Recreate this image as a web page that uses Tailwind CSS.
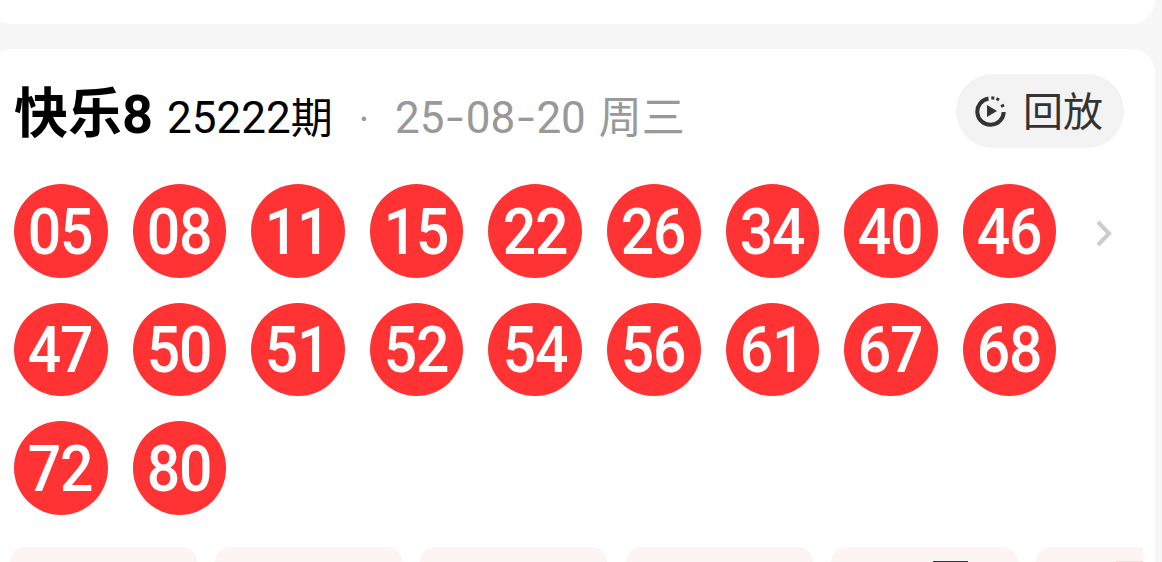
<!DOCTYPE html>
<html lang="zh-CN">

<head>
    <meta charset="UTF-8">
    <meta name="viewport" content="width=device-width, initial-scale=1.0">
    <script src="https://cdn.jsdelivr.net/npm/@tailwindcss/browser@4"></script>
    <title>快乐8</title>
</head>

<body class="bg-[#f7f7f7] overflow-hidden h-[562px] font-['Roboto','Noto_Sans_CJK_SC',sans-serif]">
    <!-- previous card, only its bottom shows -->
    <div class="h-[24px] w-[1167px] -ml-[12px] bg-white rounded-b-[24px]"></div>

    <div class="mt-[25px] w-[1167px] h-[513px] overflow-hidden -ml-[12px] pl-[12px] bg-white rounded-t-[24px]">
        <!-- header -->
        <div class="flex items-center h-[99px] pt-[25px] pl-[14px] pr-[31px]">
            <div class="flex items-baseline pt-[8px] leading-none">
                <span class="text-[54px] font-bold text-black">快乐8</span>
                <span class="ml-[14px] text-[44px] text-black">25222<span class="text-[42px]">期</span></span>
                <span class="ml-[26px] text-[40px] text-[#999999]">·</span>
                <span class="ml-[26px] text-[44px] text-[#999999]">25<span class="inline-block mx-[4.5px] scale-x-[1.4]">-</span>08<span class="inline-block mx-[4.5px] scale-x-[1.4]">-</span>20 <span class="ml-[2px] text-[43px]">周三</span></span>
            </div>
            <button class="ml-auto flex items-center h-[74px] w-[168px] pl-[19px] rounded-full bg-[#f3f3f3] text-[40px] leading-none text-[#333333]">
                <svg class="w-[32px] h-[32px]" viewBox="0 0 32 32" fill="none">
                    <path d="M13.5 3.600A13.200 13.200 0 1 0 28.700 17" stroke="#333333" stroke-width="4"/>
                    <path d="M18 1.500l-.4 3M23.500 3l-1.500 2.500M29 10l-3 1.500" stroke="#333333" stroke-width="3"/>
                    <path d="M12 10l10 6-10 6z" fill="#333333"/>
                </svg>
                <span class="ml-[16px] pt-[3px]">回放</span>
            </button>
        </div>

        <!-- balls -->
        <div class="flex mt-[36px] pl-[14px]">
            <div class="grid grid-cols-[repeat(9,93.6px)] gap-[25px] text-white text-[64px] leading-none font-medium tracking-[-1.5px]">
                <div class="h-[93.6px] pt-[4px] rounded-full bg-[#ff3333] flex items-center justify-center"><span class="pr-[1.5px] scale-x-[.92]">05</span></div>
                <div class="h-[93.6px] pt-[4px] rounded-full bg-[#ff3333] flex items-center justify-center"><span class="pr-[1.5px] scale-x-[.92]">08</span></div>
                <div class="h-[93.6px] pt-[4px] rounded-full bg-[#ff3333] flex items-center justify-center"><span class="pr-[1.5px] scale-x-[.92]">11</span></div>
                <div class="h-[93.6px] pt-[4px] rounded-full bg-[#ff3333] flex items-center justify-center"><span class="pr-[1.5px] scale-x-[.92]">15</span></div>
                <div class="h-[93.6px] pt-[4px] rounded-full bg-[#ff3333] flex items-center justify-center"><span class="pr-[1.5px] scale-x-[.92]">22</span></div>
                <div class="h-[93.6px] pt-[4px] rounded-full bg-[#ff3333] flex items-center justify-center"><span class="pr-[1.5px] scale-x-[.92]">26</span></div>
                <div class="h-[93.6px] pt-[4px] rounded-full bg-[#ff3333] flex items-center justify-center"><span class="pr-[1.5px] scale-x-[.92]">34</span></div>
                <div class="h-[93.6px] pt-[4px] rounded-full bg-[#ff3333] flex items-center justify-center"><span class="pr-[1.5px] scale-x-[.92]">40</span></div>
                <div class="h-[93.6px] pt-[4px] rounded-full bg-[#ff3333] flex items-center justify-center"><span class="pr-[1.5px] scale-x-[.92]">46</span></div>
                <div class="h-[93.6px] pt-[4px] rounded-full bg-[#ff3333] flex items-center justify-center"><span class="pr-[1.5px] scale-x-[.92]">47</span></div>
                <div class="h-[93.6px] pt-[4px] rounded-full bg-[#ff3333] flex items-center justify-center"><span class="pr-[1.5px] scale-x-[.92]">50</span></div>
                <div class="h-[93.6px] pt-[4px] rounded-full bg-[#ff3333] flex items-center justify-center"><span class="pr-[1.5px] scale-x-[.92]">51</span></div>
                <div class="h-[93.6px] pt-[4px] rounded-full bg-[#ff3333] flex items-center justify-center"><span class="pr-[1.5px] scale-x-[.92]">52</span></div>
                <div class="h-[93.6px] pt-[4px] rounded-full bg-[#ff3333] flex items-center justify-center"><span class="pr-[1.5px] scale-x-[.92]">54</span></div>
                <div class="h-[93.6px] pt-[4px] rounded-full bg-[#ff3333] flex items-center justify-center"><span class="pr-[1.5px] scale-x-[.92]">56</span></div>
                <div class="h-[93.6px] pt-[4px] rounded-full bg-[#ff3333] flex items-center justify-center"><span class="pr-[1.5px] scale-x-[.92]">61</span></div>
                <div class="h-[93.6px] pt-[4px] rounded-full bg-[#ff3333] flex items-center justify-center"><span class="pr-[1.5px] scale-x-[.92]">67</span></div>
                <div class="h-[93.6px] pt-[4px] rounded-full bg-[#ff3333] flex items-center justify-center"><span class="pr-[1.5px] scale-x-[.92]">68</span></div>
                <div class="h-[93.6px] pt-[4px] rounded-full bg-[#ff3333] flex items-center justify-center"><span class="pr-[1.5px] scale-x-[.92]">72</span></div>
                <div class="h-[93.6px] pt-[4px] rounded-full bg-[#ff3333] flex items-center justify-center"><span class="pr-[1.5px] scale-x-[.92]">80</span></div>
            </div>
            <svg class="ml-[39px] mt-[36px] w-[18px] h-[27px]" viewBox="0 0 18 27" fill="none">
                <path d="M3 2l11 11.500L3 25" stroke="#cccccc" stroke-width="4"/>
            </svg>
        </div>

        <!-- prize tiles, cut off by the bottom of the window -->
        <div class="flex gap-x-[18.2px] mt-[32px] ml-[10px] w-[1133px] overflow-hidden">
            <div class="shrink-0 w-[187px] h-[15px] rounded-t-[16px] bg-[#fdf5f3]"></div>
            <div class="shrink-0 w-[187px] h-[15px] rounded-t-[16px] bg-[#fdf5f3]"></div>
            <div class="shrink-0 w-[187px] h-[15px] rounded-t-[16px] bg-[#fdf5f3]"></div>
            <div class="shrink-0 w-[187px] h-[15px] rounded-t-[16px] bg-[#fdf5f3]"></div>
            <div class="shrink-0 w-[187px] h-[15px] rounded-t-[16px] bg-[#fdf5f3] pt-[14px] pl-[102px]">
                <div class="w-[35px] h-[1px] bg-[#333333]"></div>
            </div>
            <div class="shrink-0 w-[187px] h-[15px] rounded-t-[16px] bg-[#fdf5f3] pt-[14px] pl-[80px]">
                <div class="w-[27px] h-[1px] bg-[#f8dcdc]"></div>
            </div>
        </div>
    </div>
</body>

</html>
